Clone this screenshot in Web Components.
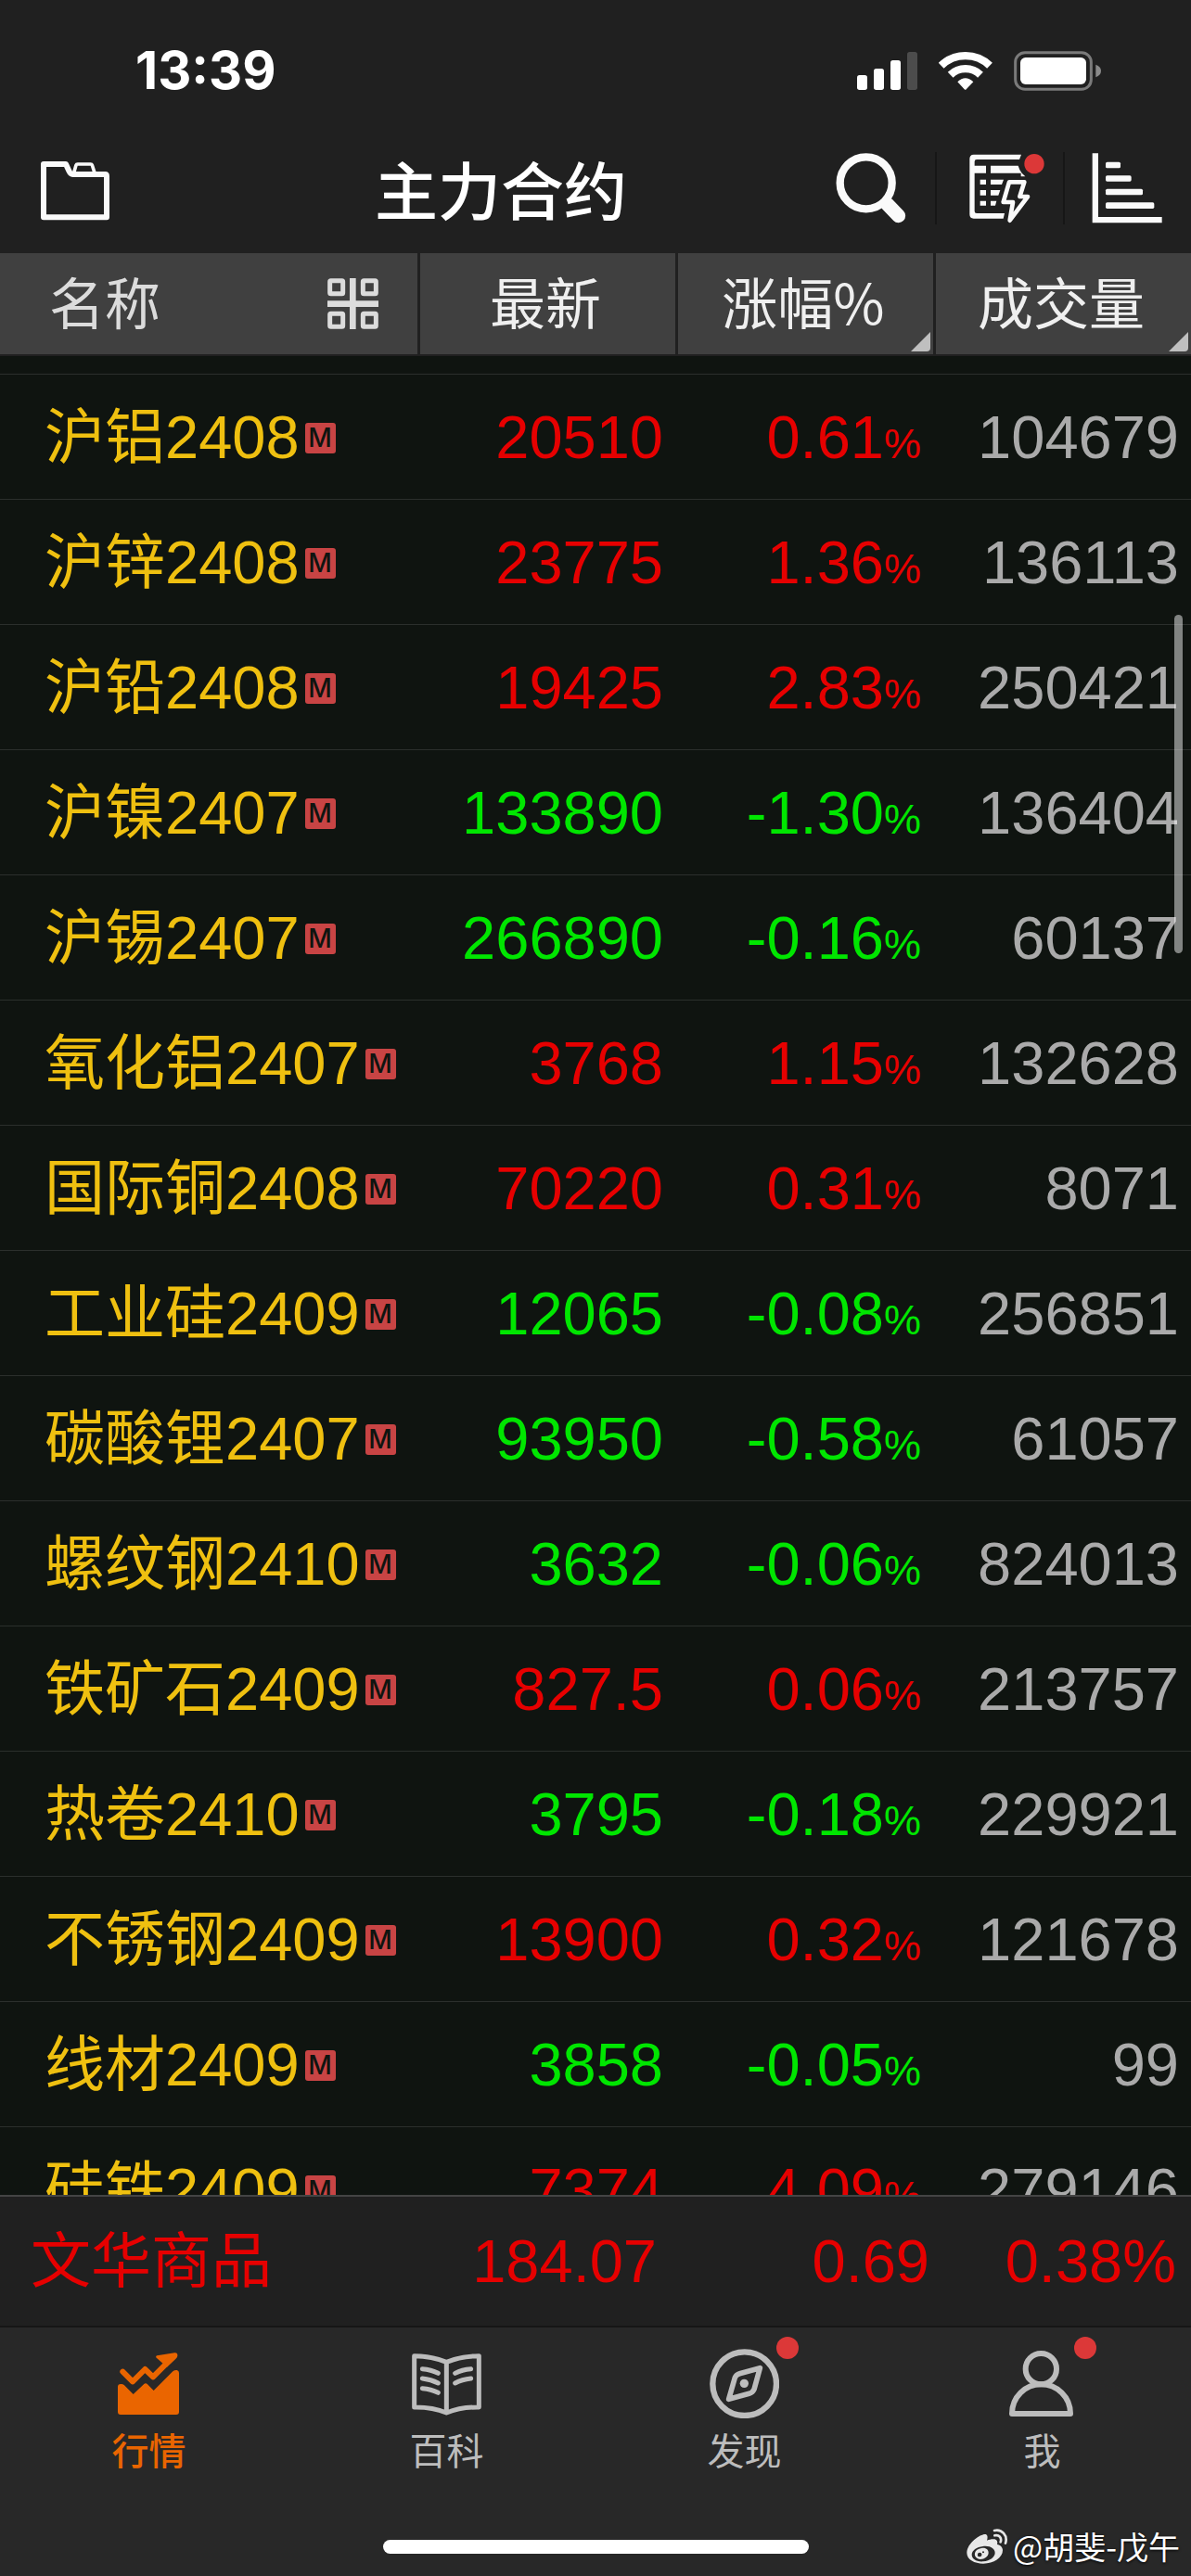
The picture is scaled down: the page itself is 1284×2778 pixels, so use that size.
<!DOCTYPE html>
<html lang="zh-CN">
<head>
<meta charset="utf-8">
<meta name="viewport" content="width=device-width, initial-scale=1">
<title>主力合约</title>
<style>
    :root{
        --bar: #202020;
        --head: #404040;
        --list: #0f1410;
        --line: #2b2f2c;
        --tabs: #282828;
        --up: #e60000;
        --down: #00e600;
        --name: #efc010;
        --muted: #aaaaaa;
        --icon: #bdbdbd;
        --accent: #ea6500;
        --dot: #dc3838;
        --cjk: "Noto Sans CJK SC", sans-serif;
        --num: "Liberation Sans", "Noto Sans CJK SC", sans-serif;
    }
    body{
        margin: 0;
        background: var(--bar);
        font-family: var(--cjk);
    }
</style>
</head>
<body>
<futures-app></futures-app>

<script>
const quotes = [
    ["沪铝2408", "20510", "0.61", "104679"],
    ["沪锌2408", "23775", "1.36", "136113"],
    ["沪铅2408", "19425", "2.83", "250421"],
    ["沪镍2407", "133890", "-1.30", "136404"],
    ["沪锡2407", "266890", "-0.16", "60137"],
    ["氧化铝2407", "3768", "1.15", "132628"],
    ["国际铜2408", "70220", "0.31", "8071"],
    ["工业硅2409", "12065", "-0.08", "256851"],
    ["碳酸锂2407", "93950", "-0.58", "61057"],
    ["螺纹钢2410", "3632", "-0.06", "824013"],
    ["铁矿石2409", "827.5", "0.06", "213757"],
    ["热卷2410", "3795", "-0.18", "229921"],
    ["不锈钢2409", "13900", "0.32", "121678"],
    ["线材2409", "3858", "-0.05", "99"],
    ["硅铁2409", "7374", "4.09", "279146"]
];

class StatusBar extends HTMLElement{
    constructor(){
        super();
        this.attachShadow({ mode: "open" });
    }

    connectedCallback(){
        this.shadowRoot.innerHTML = `
        <style>
            :host{
                display: flex;
                justify-content: space-between;
                align-items: center;
                box-sizing: border-box;
                height: 132px;
                padding: 20px 96px 0 146px;
                color: #fff;
            }
            time{
                font: 700 56px/64px Inter, sans-serif;
            }
            div{
                display: flex;
                gap: 23px;
            }
            svg{
                display: block;
                height: 43px;
            }
        </style>
        <time>13:39</time>
        <div>
            <svg width="65" viewBox="75 42 195 129" fill="#fff">
                <rect x="75" y="120" width="33" height="48" rx="8"/>
                <rect x="129" y="99" width="33" height="69" rx="8"/>
                <rect x="183" y="72" width="33" height="96" rx="8"/>
                <rect x="237" y="45" width="33" height="123" rx="8" fill="#4c4c4c"/>
            </svg>
            <svg width="58" viewBox="338 42 174 129" fill="none" stroke="#fff">
                <path d="M346 89 A113 113 0 0 1 503 89" stroke-width="25"/>
                <path d="M376 119 A70 70 0 0 1 473 119" stroke-width="25"/>
                <path d="M399 142 Q424 118 450 142 L427 166 Q424 169 421 166 Z" fill="#fff" stroke="none"/>
            </svg>
            <svg width="95" viewBox="579 42 285 129" fill="#fff">
                <rect x="584" y="47" width="245" height="119" rx="31" fill="none" stroke="#7a7a7a" stroke-width="9"/>
                <rect x="600" y="63" width="213" height="87" rx="17"/>
                <path d="M844 86 Q861 92 861 106 Q861 121 844 127 Z" fill="#8a8a8a"/>
            </svg>
        </div>
        `;
    }
}
customElements.define("status-bar", StatusBar);

class TitleBar extends HTMLElement{
    constructor(){
        super();
        this.attachShadow({ mode: "open" });
    }

    connectedCallback(){
        this.shadowRoot.innerHTML = `
        <style>
            :host{
                display: flex;
                align-items: center;
                height: 141px;
                color: #fafafa;
            }
            button{
                display: flex;
                justify-content: center;
                align-items: center;
                box-sizing: border-box;
                width: 138px;
                height: 78px;
                padding: 0;
                border: 0;
                background: none;
                color: inherit;
            }
            .folder{
                width: 210px;
                padding-left: 44px;
                justify-content: flex-start;
            }
            button + button{
                border-left: 2px solid #161616;
            }
            h1{
                flex: 1;
                margin: 0;
                text-align: center;
                color: #fff;
                font-size: 68px;
                line-height: 80px;
                font-weight: 500;
            }
            .actions{
                display: flex;
            }
            svg{
                display: block;
                overflow: visible;
            }
        </style>
        <button class="folder" aria-label="分组">
            <svg width="74" height="75" viewBox="72 46 222 225" fill="none" stroke="currentColor">
                <path d="M81 82 H153 L163 104 Q168 115 175 115 H280 Q285 115 285 121 V254 H81 Z" stroke-width="18" stroke-linejoin="round"/>
                <path d="M179 110 L186 85 Q187 82 191 82 H233 Q237 82 238 85 L246 110" stroke-width="11"/>
            </svg>
        </button>
        <h1><slot></slot></h1>
        <div class="actions">
            <button aria-label="搜索">
                <svg width="76" height="76" viewBox="62 47 228 228" fill="none" stroke="currentColor">
                    <circle cx="160" cy="144" r="84" stroke-width="25"/>
                    <path d="M229 213 L265 250" stroke-width="45" stroke-linecap="round"/>
                </svg>
            </button>
            <button aria-label="快讯">
                <svg width="66" height="75" viewBox="498 46 198 225" fill="currentColor">
                    <path d="M666 51 H512 Q499 51 499 65 V244 Q499 258 512 258 H608 L612 241 H522 Q515 241 515 234 V111 H552 V87 H515 V74 Q515 67 522 67 H660 Z"/>
                    <path d="M567 87 H656 Q660 101 668 111 L679 122 H665 V111 H567 Z"/>
                    <path d="M533 132 H552 V148 H533 Z M533 166 H552 V183 H533 Z M533 201 H552 V216 H533 Z M567 132 H609 L603 148 H567 Z M567 166 H598 L592 183 H567 Z M567 201 H586 L582 216 H567 Z"/>
                    <path d="M627 140 H676 L661 187 H687 L629 264 L639 205 H608 Z" fill="none" stroke="currentColor" stroke-width="14" stroke-linejoin="round"/>
                    <circle cx="708" cy="81" r="32" fill="var(--dot)"/>
                </svg>
            </button>
            <button aria-label="排行">
                <svg width="76" height="76" viewBox="892 47 228 228" fill="currentColor">
                    <path d="M891 48 H910 V254 H1116 V273 H891 Z"/>
                    <rect x="934" y="76" width="48" height="20" rx="5"/>
                    <rect x="934" y="120" width="83" height="19" rx="5"/>
                    <rect x="934" y="163" width="120" height="20" rx="5"/>
                    <rect x="934" y="207" width="157" height="20" rx="5"/>
                </svg>
            </button>
        </div>
        `;
    }
}
customElements.define("title-bar", TitleBar);

class QuoteTable extends HTMLElement{
    constructor(){
        super();
        this.attachShadow({ mode: "open" });
    }

    connectedCallback(){
        this.render();
    }

    renderRow([name, last, change, volume]){
        const dir = change.startsWith("-") ? "down" : "up";
        return `
        <tr class="${dir}">
            <td class="name">${name}<b>M</b></td>
            <td>${last}</td>
            <td>${change}<small>%</small></td>
            <td class="volume">${volume}</td>
        </tr>`;
    }

    render(){
        const corner = `<svg class="corner" width="21" height="21" viewBox="0 0 21 21"><path d="M21 0 V17 Q21 21 17 21 H0 Z" fill="#bfbfbf"/></svg>`;
        this.shadowRoot.innerHTML = `
        <style>
            :host{
                display: block;
                position: relative;
                overflow: hidden;
                background: var(--list);
            }
            table, thead, tbody{
                display: block;
            }
            tr{
                display: grid;
                grid-template-columns: 453fr 278fr 278fr 275fr;
                align-items: center;
            }
            thead tr{
                align-items: stretch;
            }
            th{
                position: relative;
                display: flex;
                justify-content: center;
                height: 109px;
                padding: 0;
                background: var(--head);
                border-right: 3px solid var(--bar);
                border-bottom: 2px solid var(--bar);
            }
            th:last-child{
                border-right: 0;
            }
            th button{
                display: flex;
                flex: 1;
                justify-content: center;
                align-items: center;
                padding: 0 5px 8px 0;
                border: 0;
                background: none;
                color: #efefef;
                font: 400 60px/80px var(--cjk);
            }
            th:first-child{
                justify-content: space-between;
            }
            th:first-child button{
                flex: none;
                padding-left: 53px;
                color: #dcdcdc;
            }
            th:first-child .layout{
                padding: 0 42px 0 0;
            }
            .corner{
                position: absolute;
                right: 3px;
                bottom: 3px;
            }
            tbody{
                padding-top: 19px;
                font: 65px/80px var(--num);
            }
            tbody tr{
                box-sizing: border-box;
                height: 135px;
                padding-top: 2px;
                border-top: 1px solid var(--line);
            }
            td{
                padding: 0 16px 0 0;
                text-align: right;
            }
            .up{
                color: var(--up);
            }
            .down{
                color: var(--down);
            }
            .name{
                display: flex;
                align-items: center;
                gap: 6px;
                padding: 0 0 0 48px;
                color: var(--name);
            }
            .name b{
                width: 33px;
                border-radius: 3px;
                background: #c84444;
                color: var(--list);
                text-align: center;
                font: 500 28px/33px Inter, sans-serif;
            }
            td small{
                font-size: 45px;
                line-height: 1;
            }
            .volume{
                padding-right: 13px;
                color: var(--muted);
            }
            .thumb{
                position: absolute;
                top: 390px;
                right: 9px;
                width: 9px;
                height: 365px;
                border-radius: 5px;
                background: rgba(255, 255, 255, 0.48);
            }
        </style>
        <table>
            <thead>
                <tr>
                    <th>
                        <button>名称</button>
                        <button class="layout" aria-label="布局">
                            <svg width="55" height="55" viewBox="999 450 165 165" fill="none" stroke="currentColor" stroke-width="15">
                                <rect x="1007" y="458" width="42" height="42" rx="3"/>
                                <rect x="1114" y="458" width="42" height="42" rx="3"/>
                                <rect x="1007" y="565" width="42" height="42" rx="3"/>
                                <rect x="1114" y="565" width="42" height="42" rx="3"/>
                                <path d="M1081 450 V615 M999 533 H1164" stroke-width="20"/>
                            </svg>
                        </button>
                    </th>
                    <th><button>最新</button></th>
                    <th><button>涨幅%</button>${corner}</th>
                    <th><button>成交量</button>${corner}</th>
                </tr>
            </thead>
            <tbody>${quotes.map(q => this.renderRow(q)).join("")}</tbody>
        </table>
        <div class="thumb"></div>
        `;
    }
}
customElements.define("quote-table", QuoteTable);

class IndexBar extends HTMLElement{
    constructor(){
        super();
        this.attachShadow({ mode: "open" });
    }

    connectedCallback(){
        this.shadowRoot.innerHTML = `
        <style>
            :host{
                display: grid;
                grid-template-columns: 451fr 257fr 294fr 266fr;
                align-items: center;
                height: 139px;
                padding-right: 16px;
                border-top: 2px solid #444;
                border-bottom: 2px solid #161616;
                background: var(--bar);
                color: var(--up);
                font: 65px/80px var(--num);
                text-align: right;
            }
            ::slotted(:first-child){
                padding-left: 33px;
                text-align: left;
            }
        </style>
        <slot></slot>
        `;
    }
}
customElements.define("index-bar", IndexBar);

class TabItem extends HTMLElement{
    constructor(){
        super();
        this.attachShadow({ mode: "open" });
    }

    connectedCallback(){
        this.shadowRoot.innerHTML = `
        <style>
            :host{
                display: block;
                flex: 1;
                color: var(--icon);
            }
            :host([active]){
                color: var(--accent);
                font-weight: 500;
            }
            a{
                display: flex;
                flex-direction: column;
                align-items: center;
                gap: 12px;
                color: inherit;
                text-decoration: none;
                font-size: 40px;
                line-height: 42px;
            }
            .icon{
                position: relative;
                width: 75px;
                height: 75px;
            }
            :host([dot]) .icon::after{
                content: "";
                position: absolute;
                top: -13px;
                right: -21px;
                width: 24px;
                height: 24px;
                border-radius: 50%;
                background: var(--dot);
            }
        </style>
        <a href="#">
            <div class="icon"><slot name="icon"></slot></div>
            <span><slot></slot></span>
        </a>
        `;
    }
}
customElements.define("tab-item", TabItem);

class TabBar extends HTMLElement{
    constructor(){
        super();
        this.attachShadow({ mode: "open" });
    }

    connectedCallback(){
        this.shadowRoot.innerHTML = `
        <style>
            :host{
                display: block;
                position: relative;
                padding: 23px 0 24px;
                background: var(--tabs);
            }
            nav{
                display: flex;
            }
            svg{
                display: block;
            }
            .home{
                width: 459px;
                height: 15px;
                margin: 77px auto 0;
                border-radius: 8px;
                background: #fff;
            }
            .mark{
                position: absolute;
                right: 12px;
                bottom: 11px;
                display: flex;
                align-items: center;
                gap: 5px;
                color: #fff;
                font-size: 34px;
                line-height: 42px;
                text-shadow: 0 1px 3px #000;
            }
        </style>
        <nav>
            <tab-item active>
                <svg slot="icon" width="75" height="75" viewBox="69 69 225 225" fill="currentColor">
                    <path d="M81 192 Q81 183 90 183 Q97 182 102 187 L131 216 L165 184 Q171 178 177 184 L197 204 L259 142 Q265 137 272 138 Q279 139 279 147 V273 Q279 282 270 282 H90 Q81 282 81 273 Z"/>
                    <path d="M97 143 L129 175 L169 135 L195 160 L236 119" fill="none" stroke="currentColor" stroke-width="18" stroke-linecap="round" stroke-linejoin="round"/>
                    <path d="M208 91 L265 82 Q275 81 274 92 Q273 97 268 102 L240 128 L225 115 L206 98 Q202 93 208 91 Z"/>
                </svg>
                行情
            </tab-item>
            <tab-item>
                <svg slot="icon" width="75" height="75" viewBox="1032 69 225 225" fill="none" stroke="currentColor" stroke-width="15" stroke-linejoin="round">
                    <path d="M1144 112 Q1098 93 1040 92 V258 Q1098 257 1144 276 Q1190 257 1249 258 V92 Q1190 93 1144 112 V276"/>
                    <path d="M1066 134 Q1094 136 1117 148 M1066 165 Q1094 168 1117 180 M1066 197 Q1094 199 1117 211 M1172 148 Q1194 136 1223 134 M1172 180 Q1194 168 1223 165" stroke-linecap="round"/>
                </svg>
                百科
            </tab-item>
            <tab-item dot>
                <svg slot="icon" width="75" height="75" viewBox="75 69 225 225" fill="none" stroke="currentColor" stroke-linejoin="round">
                    <circle cx="188" cy="182" r="103" stroke-width="19"/>
                    <path d="M238 131 L172 149 Q161 152 157 162 L137 232 L203 214 Q214 211 219 200 Z" stroke-width="17"/>
                    <circle cx="187" cy="181" r="14" fill="currentColor" stroke="none"/>
                </svg>
                发现
            </tab-item>
            <tab-item dot>
                <svg slot="icon" width="75" height="75" viewBox="1038 69 225 225" fill="none" stroke="currentColor" stroke-width="18" stroke-linejoin="round">
                    <circle cx="1147" cy="134" r="50"/>
                    <path d="M1053 279 C1053 225 1096 184 1147 184 C1199 184 1242 225 1242 279 Z"/>
                </svg>
                我
            </tab-item>
        </nav>
        <div class="home"></div>
        <div class="mark">
            <svg width="45" height="38" viewBox="32 80 135 114" fill="#e8e8e8">
                <path fill-rule="evenodd" d="M92 98 C76 98 34 126 33 158 C33 180 58 193 86 193 C120 193 149 174 149 150 C149 139 141 133 131 131 C134 120 129 113 118 114 C111 114 104 116 98 118 C102 106 99 98 92 98 Z M85 137 C109 134 124 145 124 158 C124 172 108 184 86 186 C65 188 49 178 49 164 C49 151 65 139 85 137 Z"/>
                <path fill-rule="evenodd" d="M80 143 C94 140 104 148 103 159 C102 171 90 179 77 179 C64 178 57 169 59 159 C61 150 69 145 80 143 Z M74 157 A7 7 0 1 0 75 171 A7 7 0 1 0 74 157 Z M86 153 A3 3 0 1 0 86 159 A3 3 0 1 0 86 153 Z"/>
                <path d="M122 86 C146 80 166 102 158 127 M123 102 C137 98 147 110 142 123" fill="none" stroke="#e8e8e8" stroke-width="8" stroke-linecap="round"/>
            </svg>
            <span>@胡斐-戊午</span>
        </div>
        `;
    }
}
customElements.define("tab-bar", TabBar);

class FuturesApp extends HTMLElement{
    constructor(){
        super();
        this.attachShadow({ mode: "open" });
    }

    connectedCallback(){
        this.shadowRoot.innerHTML = `
        <style>
            :host{
                display: flex;
                flex-direction: column;
                height: 100vh;
            }
            quote-table{
                flex: 1;
                min-height: 0;
            }
        </style>
        <status-bar></status-bar>
        <title-bar>主力合约</title-bar>
        <quote-table></quote-table>
        <index-bar>
            <span>文华商品</span>
            <span>184.07</span>
            <span>0.69</span>
            <span>0.38%</span>
        </index-bar>
        <tab-bar></tab-bar>
        `;
    }
}
customElements.define("futures-app", FuturesApp);
</script>
</body>
</html>
